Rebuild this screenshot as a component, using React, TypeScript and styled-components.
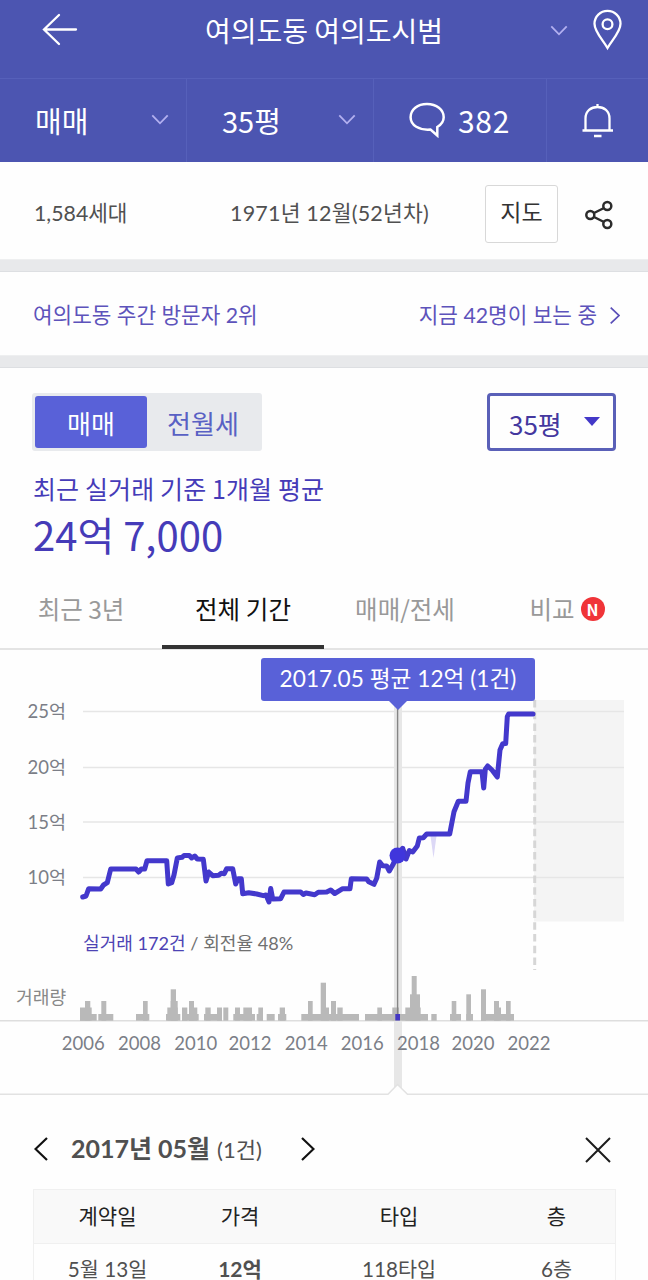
import React from "react";
import styled, { createGlobalStyle, css } from "styled-components";

const GlobalStyle = createGlobalStyle`
  *, *::before, *::after { box-sizing: border-box; }
  html, body { margin: 0; background: #fff; }
  body { overflow: hidden; }
`;

const noto = '"Noto Sans CJK KR", sans-serif';
const lato = 'Lato, "Noto Sans CJK KR", sans-serif';

const Screen = styled.div`
  width: 648px;
  height: 1280px;
  overflow: hidden;
  background: #fefefe;
  font-family: ${noto};
  color: #505050;
`;

const Label = styled.span<{ $size: number; $gap?: number; $lato?: boolean; $color?: string; $bold?: boolean }>`
  font-family: ${(p) => (p.$lato ? lato : noto)};
  font-size: ${(p) => p.$size}px;
  letter-spacing: ${(p) => p.$gap ?? 0}px;
  font-weight: ${(p) => (p.$bold ? 700 : 400)};
  line-height: 40px;
  white-space: nowrap;
  ${(p) => p.$color && css`color: ${p.$color};`}
`;

const Header = styled.header`
  height: 162px;
  background: #4c55b1;
  color: #fff;
`;

const TitleBar = styled.div`
  height: 79px;
  display: grid;
  grid-template-columns: 205px 1fr 41px 66px;
  align-items: start;
  padding: 10px 0 0;
  border-bottom: 1px solid #5660ba;
`;

const BackButton = styled.div`
  padding: 3px 0 0 42px;
`;

const TitleChevron = styled.div`
  padding: 8px 0 0 9px;
`;

const PinHolder = styled.div`
  padding-left: 10px;
  margin-top: -1px;
`;

const FilterBar = styled.div`
  height: 83px;
  display: grid;
  grid-template-columns: 187px 187px 173px 101px;
`;

const FilterCell = styled.div`
  display: flex;
  align-items: center;
  justify-content: space-between;
  padding: 0 17px 2px 35px;
  border-right: 1px solid #5660ba;
  &:last-child { border-right: 0; padding: 0 0 0 35px; }
`;

const TalkCell = styled(FilterCell)`
  justify-content: flex-start;
  gap: 13px;
`;

const Summary = styled.section`
  height: 97px;
  display: grid;
  grid-template-columns: 196px 255px 73px 1fr;
  align-items: center;
  padding: 4px 0 0 34px;
`;

const MapButton = styled.button`
  height: 58px;
  border: 1px solid #d8d8d8;
  border-radius: 3px;
  background: #fff;
  color: #333;
  padding: 0 0 7px;
  margin-top: 3px;
`;

const ShareHolder = styled.div`
  padding: 3px 0 0 27px;
  height: 32px;
`;

const Divider = styled.div`
  height: 13px;
  background: #e8e9eb;
  border-bottom: 1px solid #dddfe2;
  border-top: 1px solid #eeeff0;
`;

const Visitors = styled.section`
  height: 83px;
  display: flex;
  align-items: center;
  justify-content: space-between;
  padding: 3px 28px 0 33px;
  color: #5d53bb;
`;

const Viewing = styled.div`
  display: flex;
  align-items: center;
  gap: 13px;
`;

const Controls = styled.section`
  display: flex;
  justify-content: space-between;
  padding: 25px 32px 0;
`;

const Segmented = styled.div`
  width: 230px;
  height: 58px;
  padding: 3px;
  display: grid;
  grid-template-columns: 112px 1fr;
  background: #e8eaed;
  border-radius: 3px;
`;

const Segment = styled.div<{ $active?: boolean }>`
  display: flex;
  align-items: center;
  justify-content: center;
  padding-top: 1px;
  border-radius: 3px;
  background: ${(p) => (p.$active ? "#5961d8" : "transparent")};
  color: ${(p) => (p.$active ? "#fff" : "#5961c4")};
`;

const SizeSelect = styled.div`
  width: 129px;
  height: 58px;
  display: flex;
  align-items: center;
  justify-content: space-between;
  padding: 3px 13px 0 19px;
  border: 3px solid #5a60b8;
  border-radius: 4px;
  color: #44389f;
`;

const Caret = styled.i`
  border: 8px solid transparent;
  border-top: 9px solid #4338c8;
  border-bottom: 0;
  margin-bottom: 5px;
`;

const Price = styled.section`
  padding: 17px 33px 0;
  height: 112px;
  display: flex;
  flex-direction: column;
  gap: 6px;
  color: #453bb8;
`;

const Tabs = styled.nav`
  height: 87px;
  display: grid;
  grid-template-columns: repeat(4, 162px);
  border-bottom: 2px solid #e4e4e4;
`;

const Tab = styled.div<{ $active?: boolean }>`
  display: flex;
  align-items: center;
  justify-content: center;
  gap: 6px;
  margin-bottom: -1px;
  padding-top: 10px;
  border-bottom: 4px solid ${(p) => (p.$active ? "#333" : "transparent")};
  color: ${(p) => (p.$active ? "#111" : "#999")};
`;

const NewMark = styled.span`
  width: 24px;
  height: 24px;
  border-radius: 50%;
  background: #f03438;
  color: #fff;
  font: 700 16px/24px "Noto Sans CJK KR", sans-serif;
  text-align: center;
`;

const ChartArea = styled.section`
  position: relative;
  height: 446px;
`;

const Tooltip = styled.div`
  position: absolute;
  left: 261px;
  top: 8px;
  width: 274px;
  height: 43px;
  padding-top: 1px;
  border-radius: 3px;
  background: #5961d8;
  color: #fff;
  text-align: center;
  &::after {
    content: "";
    position: absolute;
    left: 127px;
    top: 42px;
    border: 10px solid transparent;
    border-top-color: #5961d8;
    border-bottom: 0;
  }
`;

const MonthBar = styled.section`
  display: flex;
  align-items: center;
  height: 93px;
  padding: 12px 37px 0 34px;
`;

const MonthName = styled.div`
  display: flex;
  align-items: baseline;
  gap: 7px;
  width: 193px;
  margin: 0 37px 0 23px;
`;

const CloseHolder = styled.div`
  height: 26px;
  margin: 2px 0 0 auto;
`;

const Table = styled.div`
  margin: 0 32px 0 33px;
  border: 1px solid #f0f0f0;
`;

const Row = styled.div<{ $head?: boolean }>`
  height: 54px;
  display: grid;
  grid-template-columns: 147px 118px 200px 1fr;
  align-items: center;
  justify-items: center;
  padding: 0 1px 3px 0;
  background: ${(p) => (p.$head ? "#f9f9f9" : "#fefefe")};
  border-bottom: 1px solid #f0f0f0;
  color: ${(p) => (p.$head ? "#222" : "#505050")};
  ${Label} { line-height: 20px; }
`;

const Chevron = () => (
  <svg width="18" height="12" viewBox="0 0 18 12" fill="none" stroke="#b3b0f0" strokeWidth="1.8">
    <path d="M1.3 1.3 9 9.3 16.7 1.3" />
  </svg>
);

const BackIcon = () => (
  <svg width="36" height="34" viewBox="0 0 36 34" fill="none" stroke="#fff" strokeWidth="2.3" strokeLinecap="round">
    <path d="M17 2 2 16.5 17 31M2.5 16.5H34" />
  </svg>
);

const PinIcon = () => (
  <svg width="32" height="42" viewBox="0 0 32 42" fill="none" stroke="#fff" strokeWidth="2.3">
    <path d="M15.5 39C11 31 2.5 23 2.5 14.8a13 13 0 0 1 26 0C28.5 23 20 31 15.5 39Z" />
    <circle cx="15.5" cy="15.3" r="4.9" />
  </svg>
);

const TalkIcon = () => (
  <svg width="36" height="36" viewBox="0 0 36 36" fill="none" stroke="#fff" strokeWidth="2.5">
    <path d="M28.3 33.5 21.5 27.5C10 28.5 1.6 23.3 1.6 15.3 1.6 7.5 8.5 2 18 2s16.700 5.700 16.700 13.300c0 4.200-2.200 7.200-6.400 9.700Z" />
  </svg>
);

const BellIcon = () => (
  <svg width="32" height="36" viewBox="0 0 32 36" fill="none" stroke="#fff" strokeWidth="2.3">
    <path d="M3.5 27V15.5C3.5 8 9 4 15.5 4S27.5 8 27.5 15.5V27M.5 27.5H31M15.5 1V4M12 33h7.500" />
  </svg>
);

const ShareIcon = () => (
  <svg width="28" height="30" viewBox="0 0 28 30" fill="none" stroke="#2c2c2c" strokeWidth="2.5">
    <circle cx="5.3" cy="15" r="4" />
    <circle cx="22.3" cy="6" r="4" />
    <circle cx="22.3" cy="24" r="4" />
    <path d="m9 13 10-5M9 17l10 5" />
  </svg>
);

const Arrow = ({ left, width, height, color, stroke }: { left?: boolean; width: number; height: number; color: string; stroke: number }) => (
  <svg width={width} height={height} viewBox="0 0 14 24" preserveAspectRatio="none" fill="none" stroke={color} strokeWidth={stroke}>
    <path d={left ? "M13 1 1.5 12 13 23" : "M1 1 12.5 12 1 23"} />
  </svg>
);

const CloseIcon = () => (
  <svg width="26" height="26" viewBox="0 0 26 26" stroke="#1c1c1c" strokeWidth="2">
    <path d="M1 1 25 25M25 1 1 25" />
  </svg>
);

const priceLine: [number, number][] = [
  [82.7, 897], [86, 896], [88.7, 888.7], [100.7, 889], [103.5, 885], [107.3, 882.7], [110.7, 869], [136, 869],
  [138.7, 872], [141.3, 869], [144.7, 869], [147, 860.7], [166.7, 860.7], [168.3, 884], [171.7, 882.7], [174, 875],
  [177.3, 858], [182, 857.3], [184, 855.5], [189.3, 855.5], [191.7, 858], [194.7, 856], [197.3, 859], [203.3, 859.3],
  [206, 881], [208.7, 872], [212.7, 875.7], [218.7, 875.3], [221.3, 873.3], [224.3, 873.7], [226.7, 868.7],
  [232.7, 868.7], [235.7, 884], [238, 878.7], [241.3, 878.7], [242.7, 893.7], [248.7, 892.7], [256.7, 894],
  [263.3, 895.7], [266, 895], [269, 902], [270.7, 888.5], [272.7, 899], [280.7, 898.7], [284, 892], [300.7, 892],
  [303.3, 894.5], [306, 893], [314.7, 894.8], [318.3, 892.3], [326.7, 892], [330.7, 890], [334.7, 893.5],
  [342.7, 888.7], [350, 888.7], [351.3, 878.7], [366.7, 879], [368.7, 881.7], [374, 884.3], [376.7, 878.3],
  [379.7, 862], [382.7, 865.7], [386.7, 866], [389.3, 871], [392.7, 865], [397.5, 855.5], [402.7, 848.3],
  [406, 859], [409.3, 850.7], [412.7, 852], [417.3, 846], [419.3, 838], [423.3, 837.7], [426.7, 834], [449.7, 834],
  [454, 811.7], [458.3, 801.3], [466, 801.3], [468, 783], [470.3, 771.7], [482, 771.7], [483.7, 788], [485.3, 769.3],
  [487.7, 766], [492, 770], [497.3, 777], [500, 750], [502.7, 743.7], [505.7, 743.5], [507.3, 716.7], [508.7, 714],
  [533, 714],
];

/* Each bar: left edge, right edge, top. */
const volumes: [number, number, number][] = [
  [80, 96.7, 1014], [80, 91.7, 1007.5], [85, 90.3, 1001], [98.3, 113.3, 1014], [101.3, 106.3, 1001],
  [136, 149.3, 1014], [143, 147.7, 1001], [166, 180.3, 1014], [167.3, 177.7, 1007.5], [170.7, 177.7, 1001],
  [170.7, 176, 989.3], [182, 198.7, 1014], [182, 187.3, 1007.5], [189, 197.3, 1007.5], [189, 194, 1001],
  [204, 222, 1014], [205.3, 210.7, 1007.5], [217, 222, 1007.5], [223.3, 228.3, 1007.5], [233.3, 255, 1014],
  [235, 240, 1007.5], [243.3, 252, 1007.5], [256.7, 263, 1014], [258.3, 263, 1007.5], [266.7, 274.7, 1014],
  [278, 286.3, 1014], [279.7, 285, 1007.5], [301.3, 359, 1014], [308, 312.7, 1001], [320.7, 326, 982.7],
  [326, 329, 1007.5], [331, 336, 1001], [337.3, 342.7, 1007.5], [365, 428, 1014], [377.3, 382, 1007.5],
  [392.3, 399, 1007.5], [405.3, 420.7, 1007.5], [410, 420, 994.3], [411.7, 416.7, 976], [431.3, 436.7, 1014],
  [450, 461, 1014], [451.7, 456.3, 1001], [466.3, 471, 994.3], [466.3, 473, 1014], [481, 514, 1014],
  [481, 486, 989.3], [494, 499, 1001], [494, 501, 1007.5], [506, 510.7, 1001],
];

const grid: [number, string][] = [[711.5, "25억"], [767.5, "20억"], [822, "15억"], [877.5, "10억"]];
const years: [number, number][] = [
  [2006, 83.3], [2008, 139.5], [2010, 195.7], [2012, 250], [2014, 306.2], [2016, 362.3], [2018, 418.4], [2020, 473], [2022, 529],
];

const ChartSvg = styled.svg`
  display: block;
`;

const Axis = styled.text<{ $size?: number; $color?: string }>`
  font-family: ${lato};
  font-size: ${(p) => p.$size ?? 18.5}px;
  fill: ${(p) => p.$color ?? "#7b7e87"};
`;

const Chart = () => (
  <ChartSvg width="648" height="446" viewBox="0 650 648 446">
    <rect x="534" y="700" width="90" height="221.5" fill="#f4f4f4" />
    {grid.map(([y, name]) => (
      <g key={name}>
        <path d={`M83 ${y}H624`} stroke="#e6e6e6" strokeWidth="1.6" />
        <Axis x="66" y={y + 6.5} textAnchor="end">{name}</Axis>
      </g>
    ))}
    <path d="M534.7 700V970" stroke="#d6d6d6" strokeWidth="3" strokeDasharray="7.5 4.2" />
    <path d="M0 1020.7H648" stroke="#dedede" strokeWidth="1.6" />
    <rect x="394" y="700" width="8" height="390" fill="#e7e7e7" />
    {volumes.map(([l, r, top], i) => (
      <rect key={i} x={l} y={top} width={r - l} height={1020.7 - top} fill="#b9b9b9" />
    ))}
    <path d="M397.6 704V1016" stroke="#858585" strokeWidth="1.4" />
    <rect x="395.3" y="1014" width="4.7" height="6.5" fill="#4538c4" />
    <path d="M430.5 836h6l-3 22Z" fill="#dcd8f6" />
    <polyline points={priceLine.map((p) => p.join(",")).join(" ")} fill="none" stroke="#4338cc" strokeWidth="5" strokeLinejoin="round" strokeLinecap="round" />
    <circle cx="397.5" cy="855.5" r="8" fill="#4036dc" />
    <Axis x="83" y="949.7" $size={18.1} $color="#707070">
      <tspan fill="#4d43b4">실거래 172건</tspan> / 회전율 48%
    </Axis>
    <Axis x="16" y="1003.5" $size={18.2} $color="#888">거래량</Axis>
    {years.map(([year, x]) => (
      <Axis key={year} x={x} y="1050" textAnchor="middle">{year}</Axis>
    ))}
    <path d="M0 1094.3H388L397.5 1084.5 407.5 1094.3H648V1096H0Z" fill="#fefefe" />
    <path d="M0 1094.3H388L397.5 1084.5 407.5 1094.3H648" fill="none" stroke="#e2e2e2" strokeWidth="1.5" />
  </ChartSvg>
);

export default function App() {
  return (
    <Screen>
      <GlobalStyle />
      <Header>
        <TitleBar>
          <BackButton><BackIcon /></BackButton>
          <Label $size={28}>여의도동 여의도시범</Label>
          <TitleChevron><Chevron /></TitleChevron>
          <PinHolder><PinIcon /></PinHolder>
        </TitleBar>
        <FilterBar>
          <FilterCell><Label $size={29}>매매</Label><Chevron /></FilterCell>
          <FilterCell><Label $size={29}>35평</Label><Chevron /></FilterCell>
          <TalkCell><TalkIcon /><Label $size={30} $gap={0.7}>382</Label></TalkCell>
          <FilterCell><BellIcon /></FilterCell>
        </FilterBar>
      </Header>
      <Summary>
        <Label $size={21.3} $lato>1,584세대</Label>
        <Label $size={21.5} $gap={0.2} $lato>1971년 12월(52년차)</Label>
        <MapButton><Label $size={23}>지도</Label></MapButton>
        <ShareHolder><ShareIcon /></ShareHolder>
      </Summary>
      <Divider />
      <Visitors>
        <Label $size={21.3} $lato>여의도동 주간 방문자 2위</Label>
        <Viewing>
          <Label $size={21.3} $lato>지금 42명이 보는 중</Label>
          <Arrow width={10} height={17} color="#5a4fb8" stroke={2.4} />
        </Viewing>
      </Visitors>
      <Divider />
      <Controls>
        <Segmented>
          <Segment $active><Label $size={26}>매매</Label></Segment>
          <Segment><Label $size={26}>전월세</Label></Segment>
        </Segmented>
        <SizeSelect><Label $size={26}>35평</Label><Caret /></SizeSelect>
      </Controls>
      <Price>
        <Label $size={25} $gap={0.12}>최근 실거래 기준 1개월 평균</Label>
        <Label $size={40}>24억 7,000</Label>
      </Price>
      <Tabs>
        <Tab><Label $size={24.5}>최근 3년</Label></Tab>
        <Tab $active><Label $size={24.5} $gap={0.1}>전체 기간</Label></Tab>
        <Tab><Label $size={24.5}>매매/전세</Label></Tab>
        <Tab><Label $size={24.5}>비교</Label><NewMark>N</NewMark></Tab>
      </Tabs>
      <ChartArea>
        <Chart />
        <Tooltip><Label $size={22.7} $lato>2017.05 평균 12억 (1건)</Label></Tooltip>
      </ChartArea>
      <MonthBar>
        <Arrow left width={14} height={24} color="#111" stroke={2.2} />
        <MonthName>
          <Label $size={25} $lato $bold>2017년 05월</Label>
          <Label $size={22} $lato>(1건)</Label>
        </MonthName>
        <Arrow width={14} height={24} color="#111" stroke={2.2} />
        <CloseHolder><CloseIcon /></CloseHolder>
      </MonthBar>
      <Table>
        <Row $head>
          <Label $size={21}>계약일</Label>
          <Label $size={21}>가격</Label>
          <Label $size={21}>타입</Label>
          <Label $size={21}>층</Label>
        </Row>
        <Row>
          <Label $size={20.7} $lato>5월 13일</Label>
          <Label $size={21} $lato $bold>12억</Label>
          <Label $size={20.7} $lato>118타입</Label>
          <Label $size={20.7} $lato>6층</Label>
        </Row>
      </Table>
    </Screen>
  );
}
